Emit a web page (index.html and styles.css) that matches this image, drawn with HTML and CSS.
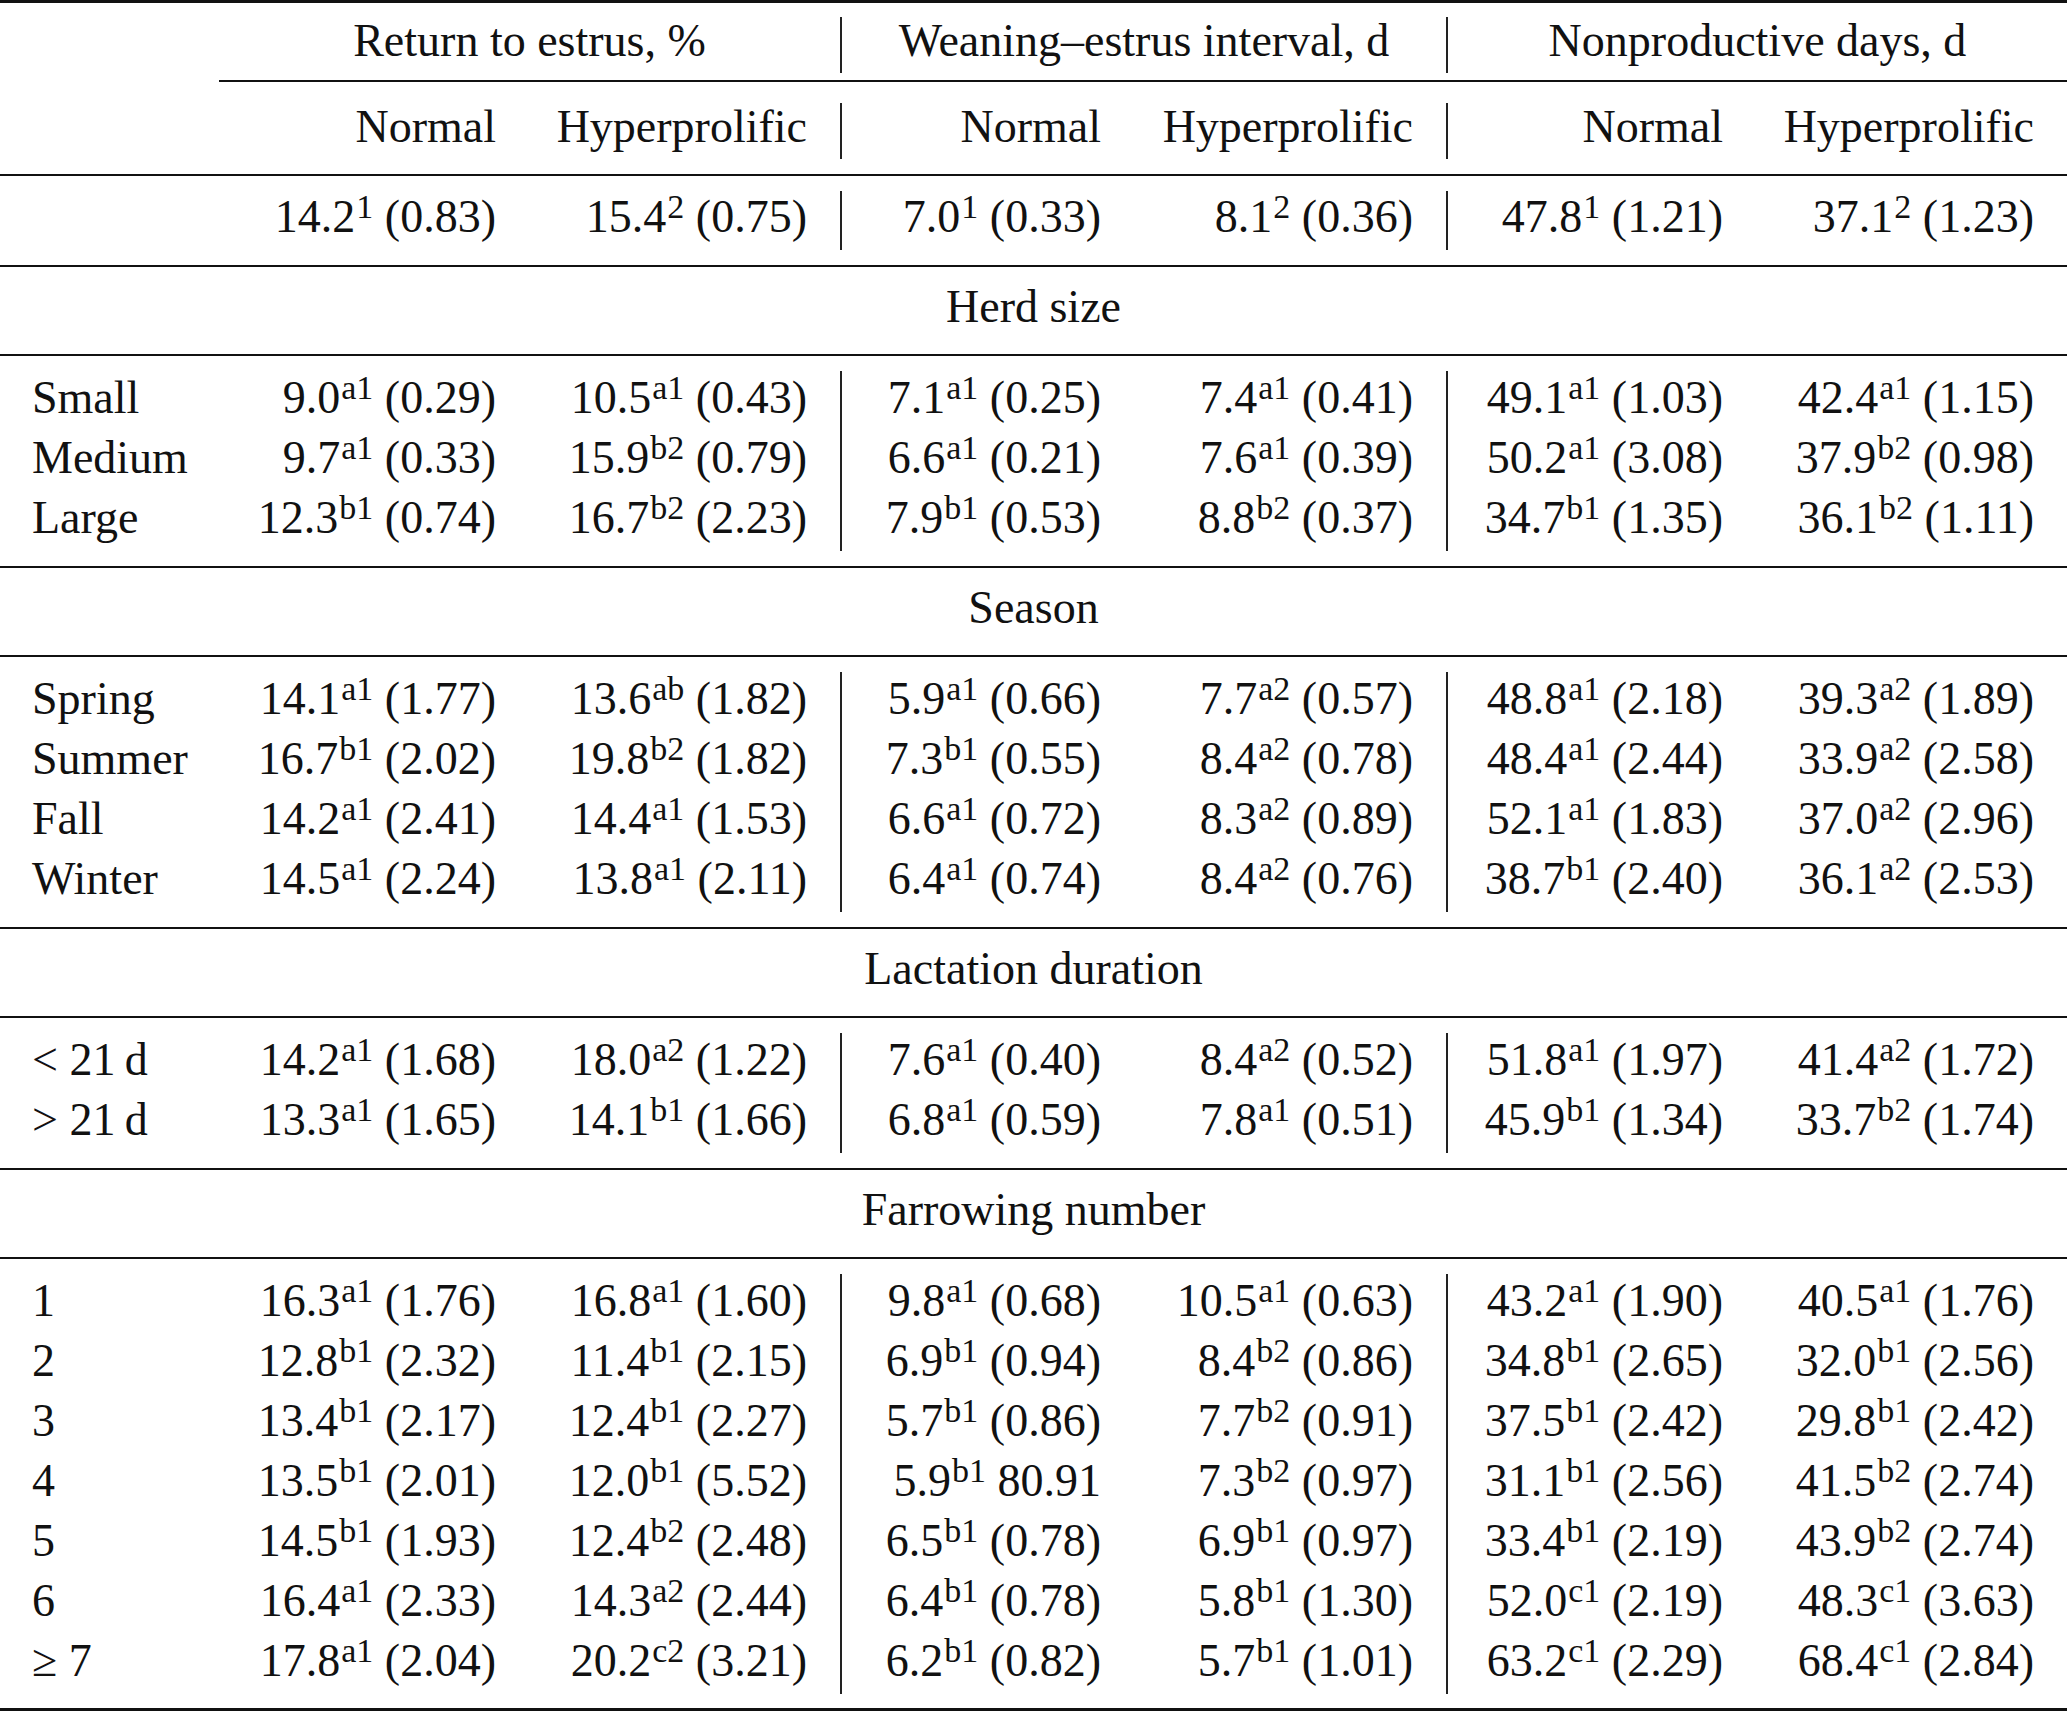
FILE: index.html
```html
<!DOCTYPE html>
<html lang="en">
<head>
    <meta charset="UTF-8">
    <meta name="viewport" content="width=device-width, initial-scale=1.0">
    <title>Return to estrus, weaning-estrus interval and nonproductive days</title>
    <link rel="stylesheet" href="styles.css">
</head>
<body>
    <div class="table">
        <!-- Cabeçalho -->
        <div class="head-top">
            <div class="span-row">
                <div></div>
                <div class="cell center">Return to estrus, %</div>
                <div class="cell center sep">Weaning&ndash;estrus interval, d</div>
                <div class="cell center sep">Nonproductive days, d</div>
            </div>
        </div>
        <div class="cmid"></div>
        <div class="head-sub">
            <div class="row">
                <div></div>
                <div class="cell num">Normal</div>
                <div class="cell num">Hyperprolific</div>
                <div class="cell num sep">Normal</div>
                <div class="cell num">Hyperprolific</div>
                <div class="cell num sep">Normal</div>
                <div class="cell num">Hyperprolific</div>
            </div>
        </div>
        <div class="overall">
            <div class="row">
                <div></div>
                <div class="cell num">14.2<sup>1</sup> (0.83)</div>
                <div class="cell num">15.4<sup>2</sup> (0.75)</div>
                <div class="cell num sep">7.0<sup>1</sup> (0.33)</div>
                <div class="cell num">8.1<sup>2</sup> (0.36)</div>
                <div class="cell num sep">47.8<sup>1</sup> (1.21)</div>
                <div class="cell num">37.1<sup>2</sup> (1.23)</div>
            </div>
        </div>

        <!-- Herd size -->
        <div class="group-title">Herd size</div>
        <div class="group">
            <div class="row">
                <div class="cell label">Small</div>
                <div class="cell num">9.0<sup>a1</sup> (0.29)</div>
                <div class="cell num">10.5<sup>a1</sup> (0.43)</div>
                <div class="cell num sep">7.1<sup>a1</sup> (0.25)</div>
                <div class="cell num">7.4<sup>a1</sup> (0.41)</div>
                <div class="cell num sep">49.1<sup>a1</sup> (1.03)</div>
                <div class="cell num">42.4<sup>a1</sup> (1.15)</div>
            </div>
            <div class="row">
                <div class="cell label">Medium</div>
                <div class="cell num">9.7<sup>a1</sup> (0.33)</div>
                <div class="cell num">15.9<sup>b2</sup> (0.79)</div>
                <div class="cell num sep">6.6<sup>a1</sup> (0.21)</div>
                <div class="cell num">7.6<sup>a1</sup> (0.39)</div>
                <div class="cell num sep">50.2<sup>a1</sup> (3.08)</div>
                <div class="cell num">37.9<sup>b2</sup> (0.98)</div>
            </div>
            <div class="row">
                <div class="cell label">Large</div>
                <div class="cell num">12.3<sup>b1</sup> (0.74)</div>
                <div class="cell num">16.7<sup>b2</sup> (2.23)</div>
                <div class="cell num sep">7.9<sup>b1</sup> (0.53)</div>
                <div class="cell num">8.8<sup>b2</sup> (0.37)</div>
                <div class="cell num sep">34.7<sup>b1</sup> (1.35)</div>
                <div class="cell num">36.1<sup>b2</sup> (1.11)</div>
            </div>
        </div>

        <!-- Season -->
        <div class="group-title">Season</div>
        <div class="group">
            <div class="row">
                <div class="cell label">Spring</div>
                <div class="cell num">14.1<sup>a1</sup> (1.77)</div>
                <div class="cell num">13.6<sup>ab</sup> (1.82)</div>
                <div class="cell num sep">5.9<sup>a1</sup> (0.66)</div>
                <div class="cell num">7.7<sup>a2</sup> (0.57)</div>
                <div class="cell num sep">48.8<sup>a1</sup> (2.18)</div>
                <div class="cell num">39.3<sup>a2</sup> (1.89)</div>
            </div>
            <div class="row">
                <div class="cell label">Summer</div>
                <div class="cell num">16.7<sup>b1</sup> (2.02)</div>
                <div class="cell num">19.8<sup>b2</sup> (1.82)</div>
                <div class="cell num sep">7.3<sup>b1</sup> (0.55)</div>
                <div class="cell num">8.4<sup>a2</sup> (0.78)</div>
                <div class="cell num sep">48.4<sup>a1</sup> (2.44)</div>
                <div class="cell num">33.9<sup>a2</sup> (2.58)</div>
            </div>
            <div class="row">
                <div class="cell label">Fall</div>
                <div class="cell num">14.2<sup>a1</sup> (2.41)</div>
                <div class="cell num">14.4<sup>a1</sup> (1.53)</div>
                <div class="cell num sep">6.6<sup>a1</sup> (0.72)</div>
                <div class="cell num">8.3<sup>a2</sup> (0.89)</div>
                <div class="cell num sep">52.1<sup>a1</sup> (1.83)</div>
                <div class="cell num">37.0<sup>a2</sup> (2.96)</div>
            </div>
            <div class="row">
                <div class="cell label">Winter</div>
                <div class="cell num">14.5<sup>a1</sup> (2.24)</div>
                <div class="cell num">13.8<sup>a1</sup> (2.11)</div>
                <div class="cell num sep">6.4<sup>a1</sup> (0.74)</div>
                <div class="cell num">8.4<sup>a2</sup> (0.76)</div>
                <div class="cell num sep">38.7<sup>b1</sup> (2.40)</div>
                <div class="cell num">36.1<sup>a2</sup> (2.53)</div>
            </div>
        </div>

        <!-- Lactation duration -->
        <div class="group-title">Lactation duration</div>
        <div class="group">
            <div class="row">
                <div class="cell label">&lt; 21&thinsp;d</div>
                <div class="cell num">14.2<sup>a1</sup> (1.68)</div>
                <div class="cell num">18.0<sup>a2</sup> (1.22)</div>
                <div class="cell num sep">7.6<sup>a1</sup> (0.40)</div>
                <div class="cell num">8.4<sup>a2</sup> (0.52)</div>
                <div class="cell num sep">51.8<sup>a1</sup> (1.97)</div>
                <div class="cell num">41.4<sup>a2</sup> (1.72)</div>
            </div>
            <div class="row">
                <div class="cell label">&gt; 21&thinsp;d</div>
                <div class="cell num">13.3<sup>a1</sup> (1.65)</div>
                <div class="cell num">14.1<sup>b1</sup> (1.66)</div>
                <div class="cell num sep">6.8<sup>a1</sup> (0.59)</div>
                <div class="cell num">7.8<sup>a1</sup> (0.51)</div>
                <div class="cell num sep">45.9<sup>b1</sup> (1.34)</div>
                <div class="cell num">33.7<sup>b2</sup> (1.74)</div>
            </div>
        </div>

        <!-- Farrowing number -->
        <div class="group-title">Farrowing number</div>
        <div class="group">
            <div class="row">
                <div class="cell label">1</div>
                <div class="cell num">16.3<sup>a1</sup> (1.76)</div>
                <div class="cell num">16.8<sup>a1</sup> (1.60)</div>
                <div class="cell num sep">9.8<sup>a1</sup> (0.68)</div>
                <div class="cell num">10.5<sup>a1</sup> (0.63)</div>
                <div class="cell num sep">43.2<sup>a1</sup> (1.90)</div>
                <div class="cell num">40.5<sup>a1</sup> (1.76)</div>
            </div>
            <div class="row">
                <div class="cell label">2</div>
                <div class="cell num">12.8<sup>b1</sup> (2.32)</div>
                <div class="cell num">11.4<sup>b1</sup> (2.15)</div>
                <div class="cell num sep">6.9<sup>b1</sup> (0.94)</div>
                <div class="cell num">8.4<sup>b2</sup> (0.86)</div>
                <div class="cell num sep">34.8<sup>b1</sup> (2.65)</div>
                <div class="cell num">32.0<sup>b1</sup> (2.56)</div>
            </div>
            <div class="row">
                <div class="cell label">3</div>
                <div class="cell num">13.4<sup>b1</sup> (2.17)</div>
                <div class="cell num">12.4<sup>b1</sup> (2.27)</div>
                <div class="cell num sep">5.7<sup>b1</sup> (0.86)</div>
                <div class="cell num">7.7<sup>b2</sup> (0.91)</div>
                <div class="cell num sep">37.5<sup>b1</sup> (2.42)</div>
                <div class="cell num">29.8<sup>b1</sup> (2.42)</div>
            </div>
            <div class="row">
                <div class="cell label">4</div>
                <div class="cell num">13.5<sup>b1</sup> (2.01)</div>
                <div class="cell num">12.0<sup>b1</sup> (5.52)</div>
                <div class="cell num sep">5.9<sup>b1</sup> 80.91</div>
                <div class="cell num">7.3<sup>b2</sup> (0.97)</div>
                <div class="cell num sep">31.1<sup>b1</sup> (2.56)</div>
                <div class="cell num">41.5<sup>b2</sup> (2.74)</div>
            </div>
            <div class="row">
                <div class="cell label">5</div>
                <div class="cell num">14.5<sup>b1</sup> (1.93)</div>
                <div class="cell num">12.4<sup>b2</sup> (2.48)</div>
                <div class="cell num sep">6.5<sup>b1</sup> (0.78)</div>
                <div class="cell num">6.9<sup>b1</sup> (0.97)</div>
                <div class="cell num sep">33.4<sup>b1</sup> (2.19)</div>
                <div class="cell num">43.9<sup>b2</sup> (2.74)</div>
            </div>
            <div class="row">
                <div class="cell label">6</div>
                <div class="cell num">16.4<sup>a1</sup> (2.33)</div>
                <div class="cell num">14.3<sup>a2</sup> (2.44)</div>
                <div class="cell num sep">6.4<sup>b1</sup> (0.78)</div>
                <div class="cell num">5.8<sup>b1</sup> (1.30)</div>
                <div class="cell num sep">52.0<sup>c1</sup> (2.19)</div>
                <div class="cell num">48.3<sup>c1</sup> (3.63)</div>
            </div>
            <div class="row">
                <div class="cell label">&ge; 7</div>
                <div class="cell num">17.8<sup>a1</sup> (2.04)</div>
                <div class="cell num">20.2<sup>c2</sup> (3.21)</div>
                <div class="cell num sep">6.2<sup>b1</sup> (0.82)</div>
                <div class="cell num">5.7<sup>b1</sup> (1.01)</div>
                <div class="cell num sep">63.2<sup>c1</sup> (2.29)</div>
                <div class="cell num">68.4<sup>c1</sup> (2.84)</div>
            </div>
        </div>
    </div>
</body>
</html>
```

FILE: styles.css
```css
body {
    margin: 0;
    background-color: #fff;
    color: #111;
    font-family: "Liberation Serif", "Times New Roman", serif;
    font-size: 46px;
}

.table {
    width: 2067px;
    border-top: 3px solid #111;
    border-bottom: 3px solid #111;
}

.row {
    display: grid;
    grid-template-columns: 219px 310px 311px 294px 312px 310px 311px;
}

.span-row {
    display: grid;
    grid-template-columns: 219px 621px 606px 621px;
}

.cell {
    white-space: nowrap;
    line-height: 54px;
    padding-bottom: 6px;
}

.center {
    text-align: center;
}

.num {
    text-align: right;
    padding-right: 33px;
}

.label {
    padding-left: 32px;
}

.sep {
    border-left: 2px solid #222;
}

sup {
    font-size: 34px;
    line-height: 0;
    vertical-align: 14px;
    padding-left: 1px;
}

/* cabeçalho */
.head-top {
    padding: 14px 0 7px;
}

.head-top .cell,
.head-sub .cell {
    line-height: 48px;
    padding-bottom: 8px;
}

.cmid {
    margin-left: 219px;
    border-top: 2px solid #111;
}

.head-sub {
    padding: 21px 0 15px;
    border-bottom: 2px solid #111;
}

.overall {
    padding: 15px 0;
    border-bottom: 2px solid #111;
}

.overall .cell {
    line-height: 52px;
    padding-bottom: 7px;
}

/* grupos */
.group-title {
    text-align: center;
    line-height: 80px;
    padding-bottom: 7px;
    border-bottom: 2px solid #111;
}

.group {
    padding: 15px 0;
    border-bottom: 2px solid #111;
}

.group:last-child {
    padding-bottom: 14px;
    border-bottom: none;
}
```
